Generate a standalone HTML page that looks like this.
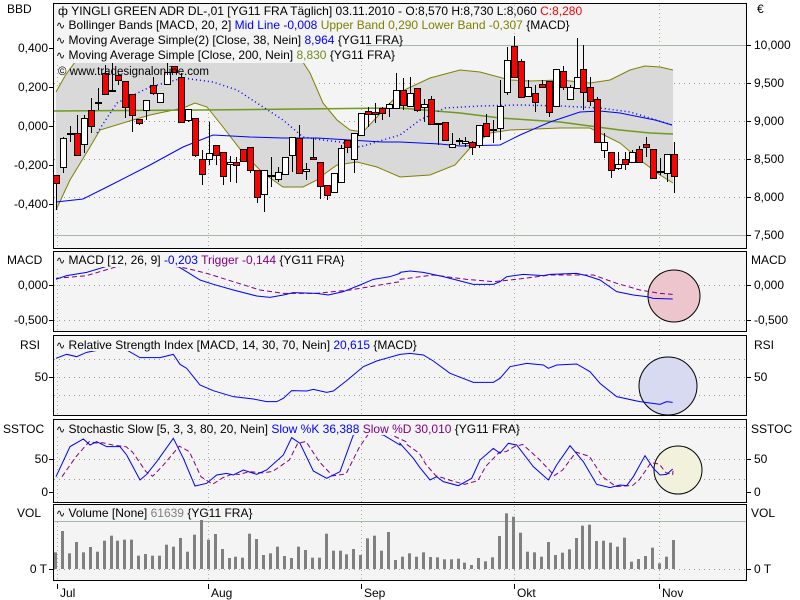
<!DOCTYPE html>
<html><head><meta charset="utf-8"><style>
html,body{margin:0;padding:0;background:#fff;width:800px;height:600px;overflow:hidden}
svg{display:block;font-family:"Liberation Sans",sans-serif;font-size:12px}
</style></head><body>
<svg id="s" width="800" height="600" xmlns="http://www.w3.org/2000/svg"></svg>
<script>
const S=document.getElementById('s');let h='';
function pl(pts,stroke,extra){return `<polyline fill="none" stroke="${stroke}" ${extra||''} points="${pts.map(p=>p.join(',')).join(' ')}"/>`;}
function cv(arr,ox,oy){return arr.map(p=>[ox+p[0]/3,oy+p[1]/3]);}
const panels=[[3,248],[251,331],[335,415],[419,502],[504,580]];
panels.forEach(p=>{h+=`<rect x="53.5" y="${p[0]+.5}" width="693" height="${p[1]-p[0]}" fill="#f4f4f4" stroke="#000"/>`});
[57,208,361,514,659].forEach(x=>{panels.forEach(p=>{h+=`<line x1="${x+.5}" y1="${p[0]+2}" x2="${x+.5}" y2="${p[1]}" stroke="#a0b8a0" stroke-dasharray="1,3"/>`})});
h+=`<line x1="54" y1="45.5" x2="746" y2="45.5" stroke="#a8b8a8"/><line x1="54" y1="235.5" x2="746" y2="235.5" stroke="#a8b8a8"/>`;
[83,121,159,197].forEach(y=>{h+=`<line x1="54" y1="${y+.5}" x2="746" y2="${y+.5}" stroke="#999" stroke-dasharray="1,4"/>`});
const up=[[56,92],[65,76],[75,62],[100,50],[130,40],[170,28],[200,25],[240,28],[270,36],[297,53],[310,73],[323,103],[337,120],[350,130],[363,132],[377,117],[393,100],[400,92],[430,78],[460,70],[480,72],[510,80],[530,81],[560,80],[590,83],[610,80],[630,70],[645,66],[660,67],[673,70]];
const lo=[[56,210],[70,180],[90,147],[100,130],[133,120],[150,115],[183,108],[195,103],[207,107],[223,127],[243,153],[263,173],[283,187],[303,187],[317,180],[323,175],[337,165],[357,162],[377,167],[400,177],[430,175],[455,165],[470,148],[490,133],[510,130],[560,128],[590,128],[600,133],[620,143],[640,160],[660,175],[673,183]];
h+=`<polygon fill="#d9d9d9" points="${up.concat(lo.slice().reverse()).map(p=>p.join(',')).join(' ')}"/>`;
h+=pl(up,'#808000');h+=pl(lo,'#808000');
h+=pl([[54,111],[200,110],[400,108],[460,113],[500,118],[560,122],[590,126],[620,130],[650,133],[673,134]],'#6f9a1e','stroke-width="1.5"');
h+=pl([[56,202],[83,199],[107,187],[150,165],[183,147],[213,135],[250,137],[283,138],[317,138],[350,140],[383,142],[400,142],[440,144],[460,146],[500,145],[520,135],[550,122],[580,112],[600,111],[620,113],[640,117],[655,120],[672,125]],'#0000ff');
h+=pl([[97,133],[117,103],[150,87],[183,78],[213,82],[237,90],[257,103],[283,120],[303,137],[323,140],[340,142],[360,147],[383,140],[400,135],[420,120],[445,108],[480,106],[520,105],[560,106],[600,108],[630,112],[650,118],[672,125]],'#0000ff','stroke-dasharray="1,3" stroke-width="1.5"');
const C=[[175,183,175,210,1],[138,167,137,173,0],[133,134,126,142,2],[133,155,115,155,1],[118,144,115,153,0],[110,126,98,133,1],[102,103,88,110,2],[73,94,65,95,1],[90,91,63,92,2],[75,80,73,85,1],[81,107,81,118,1],[94,115,94,132,1],[119,123,119,125,1],[100,110,100,120,0],[85,93,77,95,1],[93,102,93,103,0],[72,84,63,84,0],[66,72,66,73,1],[77,122,73,122,1],[109,120,109,122,0],[118,155,118,157,1],[159,174,150,185,1],[153,159,122,165,0],[145,155,145,165,1],[152,176,152,185,1],[162,164,156,182,0],[162,165,157,183,1],[149,161,149,162,1],[147,170,147,173,1],[170,197,170,203,1],[170,194,170,212,0],[175,176,157,187,2],[172,179,167,182,0],[157,174,157,174,0],[137,155,137,172,0],[138,173,125,173,1],[169,171,163,180,0],[157,159,138,159,1],[162,186,162,199,1],[185,195,185,200,1],[173,192,173,192,0],[148,182,145,182,0],[140,147,140,153,1],[133,159,133,173,0],[113,135,113,135,0],[111,114,107,127,1],[112,114,103,123,1],[108,113,107,120,1],[104,108,103,117,0],[90,108,73,108,0],[90,105,78,110,1],[93,106,77,106,0],[88,110,88,112,1],[104,107,99,122,0],[99,124,96,124,1],[123,124,123,145,2],[122,140,122,140,1],[144,147,133,147,0],[140,141,138,145,2],[141,143,137,147,0],[142,147,141,155,1],[125,145,125,148,0],[123,136,114,136,1],[129,130,120,143,2],[106,128,80,140,0],[60,92,47,95,0],[46,77,36,77,1],[61,97,59,98,1],[87,96,80,96,0],[93,102,85,112,1],[84,87,80,88,1],[81,112,81,117,1],[69,106,69,106,0],[71,87,66,90,1],[87,99,85,100,0],[77,88,38,88,0],[69,92,45,110,1],[87,101,77,106,1],[99,142,97,142,1],[142,150,133,158,0],[152,170,152,178,1],[164,168,152,170,0],[159,164,152,170,1],[152,162,150,162,0],[149,162,146,162,1],[144,147,137,157,1],[149,178,149,178,1],[171,172,158,175,2],[154,173,154,182,0],[154,176,142,193,1]];
C.forEach((c,i)=>{const x=Math.round(56+6.94*i);
h+=`<line x1="${x+.5}" y1="${c[2]}" x2="${x+.5}" y2="${c[3]}" stroke="#000"/>`;
if(c[4]==2){h+=`<rect x="${x-3}" y="${c[0]}" width="7" height="2" fill="#000"/>`;}
else h+=`<rect x="${x-2.5}" y="${c[0]+.5}" width="6" height="${Math.max(2,c[1]-c[0])}" fill="${c[4]?'#ff0000':'#fff'}" stroke="#000"/>`;});
function lbox(x,y,w){h+=`<rect x="${x}" y="${y}" width="${w}" height="15" fill="#f4f4f4"/>`}
lbox(54,4,450);lbox(54,18,410);lbox(54,33,312);lbox(54,48,305);
const wave='<tspan font-size="11">∿</tspan>';
h+=`<text x="58" y="15">ф YINGLI GREEN ADR   DL-,01 [YG11 FRA  Täglich] 03.11.2010 - O:8,570 H:8,730 L:8,060 <tspan fill="#ff0000">C:8,280</tspan></text>`;
h+=`<text x="56" y="29">${wave} Bollinger Bands [MACD, 20, 2] <tspan fill="#0000ff">Mid Line -0,008</tspan> <tspan fill="#808000">Upper Band 0,290 Lower Band -0,307</tspan> {MACD}</text>`;
h+=`<text x="56" y="44">${wave} Moving Average Simple(2) [Close, 38, Nein] <tspan fill="#0000ff">8,964</tspan> {YG11 FRA}</text>`;
h+=`<text x="56" y="59">${wave} Moving Average Simple [Close, 200, Nein] <tspan fill="#6f8a1e">8,830</tspan> {YG11 FRA}</text>`;
h+=`<text x="58" y="75" font-size="11.5">© www.tradesignalonline.com</text>`;
h+=`<text x="7" y="13">BBD</text><text x="757" y="13">€</text>`;
[['0,400',48],['0,200',87],['0,000',126],['-0,200',165],['-0,400',204]].forEach(a=>{h+=`<text x="48" y="${a[1]+4}" text-anchor="end">${a[0]}</text><line x1="49" y1="${a[1]+.5}" x2="53" y2="${a[1]+.5}" stroke="#000"/>`});
[['10,000',45],['9,500',83],['9,000',121],['8,500',159],['8,000',197],['7,500',235]].forEach(a=>{h+=`<line x1="747" y1="${a[1]+.5}" x2="751" y2="${a[1]+.5}" stroke="#000"/><text x="754" y="${a[1]+4}">${a[0]}</text>`});
[285,320].forEach(y=>{h+=`<line x1="54" y1="${y+.5}" x2="746" y2="${y+.5}" stroke="#999" stroke-dasharray="1,4"/>`});
h+=`<circle cx="674" cy="296" r="26" fill="#ecc6cc" stroke="#000"/>`;
const mb=cv([[168,103],[200,92],[260,82],[350,55],[400,62],[420,65],[500,62],[530,62],[560,80],[600,105],[640,118],[700,135],[770,153],[810,157],[850,150],[880,143],[950,145],[985,150],[1030,140],[1080,120],[1120,103],[1170,95],[1200,85]],0,245).concat(cv([[0,82],[30,78],[70,82],[130,95],[200,113],[220,118],[280,118],[300,110],[320,95],[370,88],[430,92],[450,88],[530,85],[560,92],[600,105],[650,140],[700,150],[740,155],[760,160],[818,162]],400,245));
const mt=cv([[168,100],[260,92],[350,65],[500,60],[560,70],[620,85],[700,110],[780,135],[850,145],[950,145],[1050,135],[1200,110]],0,245).concat(cv([[0,103],[100,90],[200,103],[280,110],[350,103],[450,90],[580,90],[650,115],[720,135],[780,145],[818,148]],400,245));
h+=pl(mt,'#800080','stroke-dasharray="5,3"');h+=pl(mb,'#0000ff');
lbox(54,252,264);
h+=`<text x="56" y="264">${wave} MACD [12, 26, 9] <tspan fill="#0000ff">-0,203</tspan> <tspan fill="#800080">Trigger -0,144</tspan> {YG11 FRA}</text>`;
h+=`<text x="7" y="264">MACD</text><text x="751" y="264">MACD</text>`;
[['0,000',285],['-0,500',320]].forEach(a=>{h+=`<text x="48" y="${a[1]+4}" text-anchor="end">${a[0]}</text><line x1="49" y1="${a[1]+.5}" x2="53" y2="${a[1]+.5}" stroke="#000"/><line x1="747" y1="${a[1]+.5}" x2="751" y2="${a[1]+.5}" stroke="#000"/><text x="754" y="${a[1]+4}">${a[0]}</text>`});
[359,377,395].forEach(y=>{h+=`<line x1="54" y1="${y+.5}" x2="746" y2="${y+.5}" stroke="#999" stroke-dasharray="1,4"/>`});
h+=`<circle cx="668" cy="386" r="29" fill="#d8daf2" stroke="#000"/>`;
const rs=cv([[168,340],[200,328],[230,335],[260,322],[350,305],[380,315],[420,338],[480,338],[520,328],[540,358],[560,370],[600,420],[640,437],[700,455],[760,462],[800,470],[830,470],[850,460],[875,437],[920,438],[940,433],[980,442],[1000,438],[1040,407],[1090,365],[1130,348],[1200,328]],0,245).concat(cv([[0,328],[30,325],[70,330],[100,348],[150,385],[220,412],[280,412],[300,400],[330,365],[380,355],[430,360],[445,370],[470,360],[530,357],[570,380],[600,415],[650,455],[720,470],[780,478],[800,470],[818,472]],400,245));
h+=pl(rs,'#0000ff');
lbox(54,336,330);
h+=`<text x="56" y="349">${wave} Relative Strength Index [MACD, 14, 30, 70, Nein] <tspan fill="#0000ff">20,615</tspan> {MACD}</text>`;
h+=`<text x="20" y="349">RSI</text><text x="754" y="349">RSI</text>`;
h+=`<text x="48" y="381" text-anchor="end">50</text><line x1="49" y1="377.5" x2="53" y2="377.5" stroke="#000"/><line x1="747" y1="377.5" x2="751" y2="377.5" stroke="#000"/><text x="754" y="381">50</text>`;
[427,459,479].forEach(y=>{h+=`<line x1="54" y1="${y+.5}" x2="746" y2="${y+.5}" stroke="#999" stroke-dasharray="1,4"/>`});
h+=`<circle cx="678" cy="470" r="24" fill="#f2f2dc" stroke="#000"/>`;
const sb=cv([[168,695],[210,605],[250,582],[270,600],[290,590],[320,605],[360,605],[380,630],[420,705],[440,688],[470,650],[520,580],[550,640],[585,723],[620,715],[650,690],[680,685],[700,690],[730,675],[770,688],[800,675],[850,630],[875,578],[900,595],[940,678],[980,700],[1020,680],[1060,570],[1090,560],[1150,570],[1200,600]],0,245).concat(cv([[0,595],[40,640],[60,668],[90,705],[110,695],[130,710],[175,722],[215,700],[240,645],[280,610],[300,625],[325,595],[350,600],[400,665],[445,705],[470,660],[510,602],[550,650],[590,718],[630,728],[660,720],[680,722],[700,695],[735,632],[760,670],[780,690],[800,688],[818,672]],400,245));
const sd=sb.map((p,i)=>{const q=sb[Math.max(0,i-1)];return [Math.min(p[0]+6,673),(p[1]*2+q[1])/3];});
h+=pl(sd,'#800080','stroke-dasharray="5,3"');h+=pl(sb,'#0000ff');
lbox(54,420,430);
h+=`<text x="56" y="433">${wave} Stochastic Slow [5, 3, 3, 80, 20, Nein] <tspan fill="#0000ff">Slow %K 36,388</tspan> <tspan fill="#800080">Slow %D 30,010</tspan> {YG11 FRA}</text>`;
h+=`<text x="3" y="433">SSTOC</text><text x="751" y="433">SSTOC</text>`;
[['50',459],['0',492]].forEach(a=>{h+=`<text x="48" y="${a[1]+4}" text-anchor="end">${a[0]}</text><line x1="49" y1="${a[1]+.5}" x2="53" y2="${a[1]+.5}" stroke="#000"/><line x1="747" y1="${a[1]+.5}" x2="751" y2="${a[1]+.5}" stroke="#000"/><text x="754" y="${a[1]+4}">${a[0]}</text>`});
h+=`<line x1="54" y1="521.5" x2="746" y2="521.5" stroke="#a8b8a8"/><line x1="54" y1="569.5" x2="746" y2="569.5" stroke="#999" stroke-dasharray="1,4"/>`;
const V=[157,93,160,126,157,141,155,122,107,122,119,119,167,162,167,167,134,140,114,155,104,60,119,102,147,174,170,173,101,117,165,160,140,168,174,140,150,173,173,101,152,152,163,147,165,115,107,152,96,180,170,160,170,157,171,172,178,178,176,188,195,174,184,172,108,40,50,98,155,157,170,126,165,158,148,114,77,74,123,122,128,140,113,185,177,168,143,190,170,120];
for(let i=0;i<90;i++){const x=Math.round(55+6.94*i);const t=500+V[i]/3;h+=`<rect x="${x-1}" y="${t}" width="3" height="${569-t}" fill="#808080"/>`;}
lbox(54,505,124);
h+=`<text x="56" y="517">${wave} Volume [None] <tspan fill="#808080">61639</tspan> {YG11 FRA}</text>`;
h+=`<text x="17" y="517">VOL</text><text x="751" y="517">VOL</text>`;
h+=`<text x="47" y="573" text-anchor="end">0 T</text><line x1="49" y1="569.5" x2="53" y2="569.5" stroke="#000"/><line x1="747" y1="569.5" x2="751" y2="569.5" stroke="#000"/><text x="754" y="573">0 T</text>`;
[['Jul',57],['Aug',208],['Sep',361],['Okt',514],['Nov',659]].forEach(a=>{h+=`<line x1="${a[1]+.5}" y1="584" x2="${a[1]+.5}" y2="589" stroke="#000"/><text x="${a[1]+3}" y="597">${a[0]}</text>`});
S.innerHTML=h;
</script>
</body></html>
